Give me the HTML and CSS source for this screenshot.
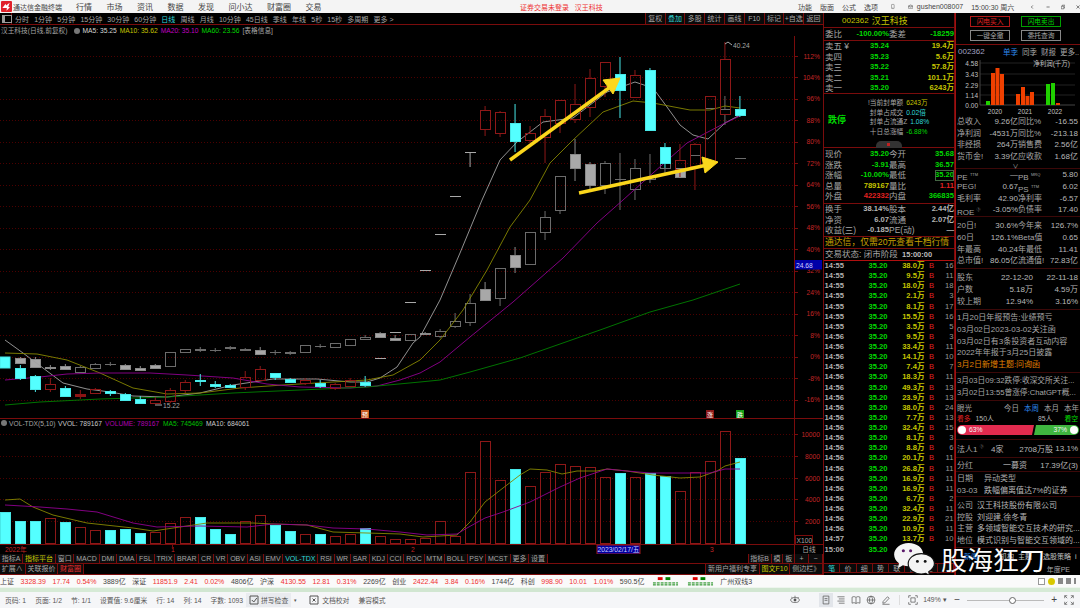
FILE: index.html
```html
<!DOCTYPE html>
<html lang="zh-CN">
<head>
    <meta charset="UTF-8">
    <title>通达信金融终端 - 汉王科技</title>
    <link rel="stylesheet" href="styles.css">
</head>
<body>
    <!-- Title bar -->
    <div class="titlebar">
        <svg class="logo" viewBox="0 0 12 12"><rect width="12" height="12" rx="1" fill="#e0202a"/><path d="M1.5 7.5 5 3l.5 2 4-3-1.6 4.4 1.8.3L6 10.5 6.4 7.6z" fill="#fff"/></svg>
        <span class="app-name">通达信金融终端</span>
        <nav class="menu"><span>行情</span><span>市场</span><span>资讯</span><span>数据</span><span>发现</span><span>问小达</span><span>财富圈</span><span>交易</span></nav>
        <span class="login-note">证券交易未登录&nbsp;&nbsp;&nbsp;汉王科技</span>
        <div class="tools">
            <span>功能</span><span>版面</span><span>公式</span><span>选项</span>
            <svg class="tool-icon" viewBox="0 0 8 10"><rect x="1" y=".5" width="6" height="9" rx="1" fill="none" stroke="#555"/><path d="M3 8h2" stroke="#555"/></svg>
            <svg class="tool-icon mail" viewBox="0 0 11 9"><path d="M1 3.5h9v5H1zM1 3.5 5.5 1 10 3.5 5.5 6z" fill="none" stroke="#555"/></svg>
            <span class="user">gushen008007</span>
            <span class="clock">15:00:30 周六</span>
            <svg class="win-btn" viewBox="0 0 8 8"><path d="M5.5 1 2.5 4l3 3" fill="none" stroke="#333" stroke-width="1.2"/></svg>
            <svg class="win-btn" viewBox="0 0 8 8"><path d="M1 4h6" stroke="#333" stroke-width="1.2"/></svg>
            <svg class="win-btn" viewBox="0 0 8 8"><path d="M.5 2.5h5v5h-5zM2.5 2.5V.5h5v5h-2" fill="none" stroke="#333"/></svg>
            <svg class="win-btn" viewBox="0 0 8 8"><path d="m1 1 6 6M7 1 1 7" stroke="#333" stroke-width="1.2"/></svg>
        </div>
    </div>

    <div class="main">
        <!-- Chart column -->
        <div class="chart-col">
            <div class="period-bar">
                <span class="side-toggle"></span>
                <div class="periods"><span>分时</span><span>1分钟</span><span>5分钟</span><span>15分钟</span><span>30分钟</span><span>60分钟</span><span class="cyan">日线</span><span>周线</span><span>月线</span><span>10分钟</span><span>45日线</span><span>季线</span><span>年线</span><span>5秒</span><span>15秒</span><span>多周期</span><span>更多 &gt;</span></div>
                <div class="chart-btns"><span>复权</span><span class="cyan">叠加</span><span>多股</span><span>统计</span><span>画线</span><span>F10</span><span>标记</span><span>+自选</span><span>返回</span></div>
            </div>
            <div class="legend">
                <span>汉王科技(日线,前复权)</span>
                <i class="legend-dot"></i>
                <span class="white">MA5: 35.25</span>
                <span class="yellow">MA10: 35.62</span>
                <span class="magenta">MA20: 35.10</span>
                <span class="green">MA60: 23.56</span>
                <span>[表格信息]</span>
            </div>
            <svg id="chart" class="chart" viewBox="0 36 823 518"></svg>
            <div class="tab-row">
                <span>指标A</span><span class="yellow">指标平台</span><span>窗口</span><span>MACD</span><span>DMI</span><span>DMA</span><span>FSL</span><span>TRIX</span><span>BRAR</span><span>CR</span><span>VR</span><span>OBV</span><span>ASI</span><span>EMV</span><span class="cyan">VOL-TDX</span><span>RSI</span><span>WR</span><span>SAR</span><span>KDJ</span><span>CCI</span><span>ROC</span><span>MTM</span><span>BOLL</span><span>PSY</span><span>MCST</span><span>更多</span><span>设置</span>
                <span class="push">指标B</span><span>模</span><span>板</span><span class="pm">+</span><span class="pm">−</span>
            </div>
            <div class="tab-row second">
                <span>扩展∧</span><span>关联报价</span><span class="red-tab">财富圈</span>
                <span class="push">新用户福利专享</span><span class="yellow">图文F10</span><span>侧边栏》</span>
            </div>
        </div>

        <!-- Quote column -->
        <div class="quote-col">
            <div class="q-title"><b>002362</b><strong>汉王科技</strong></div>
            <div class="q-row q-ratio"><span>委比</span><b class="green">-100.00%</b><span>委差</span><b class="green">-18259</b></div>
            <div class="q-block q-asks">
                <div class="q-row"><span>卖五 ¥</span><b class="green">35.24</b><i></i><b class="yellow">19.4万</b></div>
                <div class="q-row"><span>卖四</span><b class="green">35.23</b><i></i><b class="yellow">5.6万</b></div>
                <div class="q-row"><span>卖三</span><b class="green">35.22</b><i></i><b class="yellow">57.8万</b></div>
                <div class="q-row"><span>卖二</span><b class="green">35.21</b><i></i><b class="yellow">101.1万</b></div>
                <div class="q-row"><span>卖一</span><b class="green">35.20</b><i></i><b class="yellow">6243万</b></div>
            </div>
            <div class="limit-box">
                <strong class="green">跌停</strong>
                <div class="limit-info">
                    <p>!当前封单额 <em class="yellow">6243万</em></p>
                    <p>&nbsp;封单占成交 <em class="cyan">0.02倍</em></p>
                    <p>&nbsp;封单占流通Z <em class="cyan">1.08%</em></p>
                    <p>&nbsp;十日总涨幅 <em class="green">-6.88%</em></p>
                </div>
                <span class="collapse"></span>
            </div>
            <div class="q-block q-price">
                <div class="q-row"><span>现价</span><b class="green">35.20</b><span>今开</span><b class="green">35.68</b></div>
                <div class="q-row"><span>涨跌</span><b class="green">-3.91</b><span>最高</span><b class="green">36.57</b></div>
                <div class="q-row"><span>涨幅</span><b class="green">-10.00%</b><span>最低</span><b class="green boxed">35.20</b></div>
                <div class="q-row"><span>总量</span><b class="yellow">789167</b><span>量比</span><b class="red">1.11</b></div>
                <div class="q-row"><span>外盘</span><b class="red">422332</b><span>内盘</span><b class="green">366835</b></div>
            </div>
            <div class="q-block q-fund">
                <div class="q-row"><span>换手</span><b>38.14%</b><span>股本</span><b>2.44亿</b></div>
                <div class="q-row"><span>净资</span><b>6.07</b><span>流通</span><b>2.07亿</b></div>
                <div class="q-row"><span>收益(三)</span><b>-0.185</b><span>PE(动)</span><b>—</b></div>
            </div>
            <div class="q-promo">通达信，仅需20元查看千档行情</div>
            <div class="q-state">交易状态: 闭市阶段 <b>15:00:00</b></div>
            <div id="ticks" class="ticks"></div>
            <div class="tick-tabs"><span class="cyan">笔</span><span>价</span><span>细</span><span>势</span><span>联</span><span>债</span><span>主</span><span></span></div>
        </div>

        <!-- Finance column -->
        <div class="fin-col">
            <div class="trade-btns">
                <span class="btn-buy">闪电买入</span><span class="btn-sell">闪电卖出</span>
                <span>一键全撤</span><span>委托查询</span>
            </div>
            <div class="fin-head"><b>002362</b><span class="blue">单季</span><span>同季</span><span>财报</span><span>更多..</span></div>
            <svg class="profit-chart" viewBox="955 58 125 58">
                <path class="pc-grid" d="M980 63h95M980 74h95M980 85h95M980 95h95"/>
                <path class="pc-axis" d="M980 60v45h95"/>
                <text x="978" y="66">4.58</text><text x="978" y="77">3.43</text><text x="978" y="88">2.29</text><text x="978" y="98">1.14</text><text x="978" y="108">0.00</text>
                <text class="pc-title" x="1070" y="66">净利润(千万)</text>
                <rect class="pc-up" x="986" y="101" width="4" height="4"/><rect class="pc-bar" x="991" y="73" width="4" height="32"/><rect class="pc-bar" x="995.5" y="68" width="4" height="37"/><rect class="pc-bar" x="1000" y="74" width="4" height="31"/>
                <rect class="pc-bar" x="1016" y="94" width="4" height="11"/><rect class="pc-bar" x="1021" y="87" width="4" height="18"/><rect class="pc-bar" x="1025.5" y="96" width="4" height="9"/><rect class="pc-bar" x="1030" y="92" width="4" height="13"/>
                <rect class="pc-up" x="1046" y="84" width="4" height="21"/><rect class="pc-up" x="1051" y="83" width="4" height="22"/><rect class="pc-bar" x="1056" y="103" width="4" height="2"/>
                <text class="pc-year" x="995" y="114">2020</text><text class="pc-year" x="1025" y="114">2021</text><text class="pc-year" x="1055" y="114">2022</text>
            </svg>
            <div class="f-block f-income">
                <div class="f-row"><span>总收入</span><b>9.26亿</b><span>同比%</span><b>-16.55</b></div>
                <div class="f-row"><span>净利润</span><b>-4531万</b><span>同比%</span><b>-213.18</b></div>
                <div class="f-row"><span>非经损</span><b>264万</b><span>销售费</span><b>2.56亿</b></div>
                <div class="f-row"><span>货币金!</span><b>3.39亿</b><span>应收款</span><b>1.68亿</b></div>
                <div class="chevron">∨</div>
            </div>
            <div class="f-block f-ratio">
                <div class="f-row"><span>PE <sup>TTM</sup></span><b>—</b><span>PB <sup>MRQ</sup></span><b>5.80</b></div>
                <div class="f-row"><span>PEG!</span><b>0.67</b><span>PS <sup>TTM</sup></span><b>6.02</b></div>
                <div class="f-row"><span>毛利率</span><b>42.90</b><span>净利率</span><b>-6.57</b></div>
                <div class="f-row"><span>ROE <sup>③</sup></span><b>-3.05%</b><span>负债率</span><b>17.40</b></div>
            </div>
            <div class="f-block f-market">
                <div class="f-row"><span>20日!</span><b>30.6%</b><span>今年来</span><b>126.7%</b></div>
                <div class="f-row"><span>60日</span><b>126.1%</b><span>Beta值</span><b>0.65</b></div>
                <div class="f-row"><span>年最高</span><b>40.24</b><span>年最低</span><b>11.41</b></div>
                <div class="f-row"><span>总市值!</span><b>86.05亿</b><span>流通值!</span><b>72.83亿</b></div>
            </div>
            <div class="f-block f-holders">
                <div class="h-row"><span>股东</span><b>22-12-20</b><b>22-11-18</b></div>
                <div class="h-row"><span>户数</span><b>5.18万</b><b>4.59万</b></div>
                <div class="h-row"><span>较上期</span><b>12.94%</b><b>3.16%</b></div>
            </div>
            <div class="f-block f-news">
                <p>1月20日年报预告:业绩预亏</p>
                <p>03月02日2023-03-02关注函</p>
                <p>03月02日有3条投资者互动内容</p>
                <p>2022年年报于3月25日披露</p>
                <p class="orange">3月2日新增主题:问询函</p>
            </div>
            <div class="f-block f-alerts">
                <p>3月03日09:32跌停:收深交所关注...</p>
                <p>3月02日13:55曾涨停:ChatGPT概...</p>
            </div>
            <div class="f-block f-vision">
                <div class="v-head"><span class="v-title">眼光</span><span>今日</span><span class="blue">本周</span><span>本月</span><span>本年</span></div>
                <div class="v-counts"><em class="red">看多</em><b>150人</b><b class="v-right">85人</b><em class="green">看空</em></div>
                <div class="v-bar">
                    <div class="v-up"><i class="v-thumb"></i>63%</div>
                    <div class="v-down">37%<i class="v-thumb"></i></div>
                </div>
            </div>
            <div class="f-block f-legal"><span>法人1 <sup>③</sup></span><b>4家</b><b>2708万股</b><b>13.1%</b></div>
            <div class="f-block f-divid"><span>分红</span><b>一募资</b><b>17.39亿(3)</b></div>
            <div class="f-block f-event">
                <div class="e-row"><span>日期</span><span>异动类型</span></div>
                <div class="e-row"><span>03-03</span><span class="light">跌幅偏离值达7%的证券</span></div>
            </div>
            <div class="f-block f-profile">
                <div class="e-row"><span>公司</span><span class="light">汉王科技股份有限公司</span></div>
                <div class="e-row"><span>控股</span><span class="light">刘迎建,徐冬青</span></div>
                <div class="e-row"><span>主营</span><span class="light">多领域智能交互技术的研究...</span></div>
                <div class="e-row"><span>地位</span><span class="light">模式识别与智能交互领域的...</span></div>
            </div>
            <div class="f-tabs"><span class="blue">新闻</span><span class="tab-gap">机构</span><span>主题</span><span class="tab-gap-sm">选股策略</span><span>i</span></div>
            <div class="f-last"><span>年度PE</span></div>
        </div>

        <!-- Watermark over the screenshot -->
        <div class="watermark">
            <svg class="wm-logo" viewBox="0 0 44 34">
                <path d="M16 1C7.500 1 1 6.400 1 13c0 3.700 2 6.800 5 9l-1 5 5-3c2 .600 4 .9 6 .9 8.500 0 15-5.400 15-12S24.500 1 16 1z" fill="#f4f4f4"/>
                <circle cx="10.500" cy="9" r="1.600" fill="#5a1a6a"/><circle cx="18" cy="9" r="1.600" fill="#5a1a6a"/>
                <path d="M29 12c-7.700 0-13.500 4.700-13.500 10.500S21.300 33 29 33c1.600 0 3-.2 4.500-.7l4 2.200-.8-3.900c3-1.900 5.800-4.900 5.800-8.100C42.500 16.700 36.700 12 29 12z" fill="#f4f4f4" stroke="#111" stroke-width="1.200"/>
                <circle cx="25" cy="20" r="1.500" fill="#111"/><circle cx="33" cy="20" r="1.500" fill="#111"/>
            </svg>
            <span>股海狂刀</span>
        </div>
    </div>

    <!-- Market index strip -->
    <div class="indexbar">
        <span>上证</span><em>3328.39</em><em>17.74</em><em>0.54%</em><span>3889亿</span>
        <span>深证</span><em>11851.9</em><em>2.41</em><em>0.02%</em><span>4806亿</span>
        <span>沪深</span><em>4130.55</em><em>12.81</em><em>0.31%</em><span>2269亿</span>
        <span>创业</span><em>2422.44</em><em>3.84</em><em>0.16%</em><span>1744亿</span>
        <span>科创</span><em>998.90</em><em>10.01</em><em>1.01%</em><span>590.5亿</span>
        <svg class="mini-ticks" viewBox="0 0 28 9"><rect x="6" width="5" height="3" fill="#e00000"/><rect x="14" width="5" height="3" fill="#008000"/><path d="M1 6h26M1 8h26" stroke="#008000" stroke-dasharray="3 1"/></svg>
        <svg class="mini-ticks" viewBox="0 0 28 9"><rect x="6" width="5" height="3" fill="#e00000"/><rect x="14" width="5" height="3" fill="#008000"/><path d="M1 6h26M1 8h26" stroke="#008000" stroke-dasharray="3 1"/></svg>
        <span class="server">广州双线3</span>
        <div class="index-tools">
            <i class="check-box"></i><i class="smile"></i><i class="tool-dot"></i><i class="tool-dot"></i><i class="tool-dot small"></i>
        </div>
    </div>
    <div class="greenstrip"><i></i></div>

    <!-- Word processor status bar -->
    <div class="wordbar">
        <span>页码: 1</span><span>页面: 1/2</span><span>节: 1/1</span><span>设置值: 9.6厘米</span><span>行: 14</span><span>列: 14</span><span>字数: 1093</span>
        <span class="spell"><svg viewBox="0 0 10 10"><path d="M1 1h8v8H1z" fill="none" stroke="#555"/><path d="m2.800 5 2 2 3-4" fill="none" stroke="#555"/></svg>拼写检查</span><span class="caret">▾</span>
        <span class="icon-text"><svg viewBox="0 0 10 10"><path d="M1 1h8v8H1z" fill="none" stroke="#555"/><path d="m3.500 3.500 3 3M6.500 3.500l-3 3" stroke="#555"/></svg>文档校对</span>
        <span>兼容模式</span>
        <div class="view-tools">
            <svg class="eye" viewBox="0 0 14 14"><ellipse cx="7" cy="7" rx="6" ry="3.500" fill="none" stroke="#555"/><circle cx="7" cy="7" r="2" fill="#555"/><path d="M2 3l1.500 1.500M12 3l-1.500 1.500M7 1v2" stroke="#555"/></svg>
            <svg class="active" viewBox="0 0 14 14"><path d="M3 1.500h8v11H3zM5 5h4M5 7.500h4" fill="none" stroke="#555"/></svg>
            <svg viewBox="0 0 14 14"><path d="M2 2.500h10M4 5.500h8M2 8.500h10M4 11.500h8" fill="none" stroke="#555"/></svg>
            <svg viewBox="0 0 14 14"><path d="M1.500 3c2-1 4-1 5.500.5C8.500 2 10.500 2 12.500 3v8.500c-2-1-4-1-5.500.5-1.500-1.500-3.500-1.500-5.500-.5zM7 3.500V12" fill="none" stroke="#555"/></svg>
            <svg viewBox="0 0 14 14"><circle cx="7" cy="7" r="5.500" fill="none" stroke="#555"/><path d="M1.500 7h11M7 1.500c-3 3-3 8 0 11M7 1.500c3 3 3 8 0 11" fill="none" stroke="#555"/></svg>
            <svg viewBox="0 0 14 14"><path d="m3 9 6-6.500 2.500 2L5.500 11 2.500 11.500zM2 13h10" fill="none" stroke="#555"/></svg>
            <i class="view-sep"></i>
            <svg viewBox="0 0 14 14"><path d="M1 4V1h3M10 1h3v3M13 10v3h-3M4 13H1v-3M4 4h6v6H4z" fill="none" stroke="#555"/></svg>
            <span class="zoom-val">149% ▾</span>
            <span class="zoom-btn">−</span>
            <div class="slider"><i></i></div>
            <span class="zoom-btn">+</span>
            <svg viewBox="0 0 14 14"><path d="M1 4.500V1h3.500M9.500 1H13v3.500M13 9.500V13H9.500M4.500 13H1V9.500M1 1l3.500 3.500M13 1 9.500 4.500M13 13 9.500 9.500M1 13l3.500-3.500" fill="none" stroke="#555"/></svg>
        </div>
    </div>

    <script src="chart.js"></script>
</body>
</html>
```

FILE: styles.css
```css
:root {
    --line: #7a0c0c;
    --label: #a6a6a6;
    --green: #00d800;
    --yellow: #c4c400;
    --red: #e02020;
    --cyan: #30d8d8;
}

* { box-sizing: border-box; }

body {
    margin: 0;
    width: 1080px;
    height: 608px;
    overflow: hidden;
    background: #000;
    font-family: "Liberation Sans", "Noto Sans CJK SC", sans-serif;
    font-size: 7px;
    color: var(--label);
}

p { margin: 0; }
em, i { font-style: normal; }
b { font-weight: normal; }

.green { color: var(--green); }
.yellow { color: var(--yellow); }
.red { color: var(--red); }
.cyan { color: var(--cyan); }
.white { color: #d8d8d8; }
.magenta { color: #c000c0; }
.blue { color: #2c86e8; }
.orange { color: #e08000; }

/* Title bar */
.titlebar {
    height: 13px;
    background: #f4f4f4;
    color: #444;
    display: flex;
    align-items: center;
    position: relative;
}

.logo { width: 11px; height: 11px; margin-left: 1px; flex: none; }
.app-name { margin-left: 1px; width: 63px; white-space: nowrap; }

.menu { display: flex; font-size: 8px; gap: 14.500px; white-space: nowrap; }

.login-note {
    position: absolute;
    left: 520px;
    color: #ee3030;
    white-space: nowrap;
}

.tools {
    margin-left: auto;
    width: 282px;
    display: flex;
    align-items: center;
    gap: 8px;
    white-space: nowrap;
}

.tool-icon { width: 7px; height: 9px; margin-left: 5px; }
.tool-icon.mail { width: 10px; margin-left: 5px; margin-right: -4px; }
.user { margin-left: 0; }
.clock { margin-left: 0; }
.win-btn { width: 8px; height: 8px; margin-left: 3px; }
.clock + .win-btn { margin-left: 8px; }

.main { height: 562px; display: flex; position: relative; }

/* Chart column */
.chart-col { width: 823px; flex: none; display: flex; flex-direction: column; }

.period-bar {
    height: 12px;
    display: flex;
    align-items: center;
    border-bottom: 1px solid var(--line);
    white-space: nowrap;
}

.side-toggle {
    width: 12px;
    height: 100%;
    border-right: 1px solid var(--line);
    position: relative;
    flex: none;
}

.side-toggle::after {
    content: "";
    position: absolute;
    left: 2px;
    top: 2px;
    width: 6px;
    height: 6px;
    border: 1px solid #999;
    border-left-width: 3px;
}

.periods { display: flex; gap: 5.200px; margin-left: 3px; }

.chart-btns { margin-left: auto; display: flex; height: 100%; }

.chart-btns span {
    width: 19.800px;
    text-align: center;
    line-height: 11px;
    border-left: 1px solid var(--line);
    background: #0a0a0a;
}

.legend {
    height: 11px;
    line-height: 11px;
    padding-left: 1px;
    display: flex;
    align-items: center;
    gap: 3px;
    font-size: 6.700px;
    white-space: nowrap;
}

.legend-dot {
    width: 6px;
    height: 6px;
    border-radius: 50%;
    background: #777;
    margin: 0 0 0 3px;
}

.chart { width: 823px; height: 518px; display: block; flex: none; }

.chart text { font-size: 6.700px; fill: #c42626; }
.chart .axis-label { text-anchor: end; }
.chart .dim { fill: #a6a6a6; }
.chart .v-yellow { fill: var(--yellow); }
.chart .v-white { fill: #c8c8c8; }
.chart .v-magenta { fill: #b000b0; }
.chart .v-green { fill: #00c000; }
.chart .date-text { fill: #d0d0ff; text-anchor: middle; }
.chart .mark-text { fill: #fff; font-size: 6px; text-anchor: middle; }

.grid { stroke: #4c0000; stroke-dasharray: 1 2; fill: none; }
.frame { stroke: var(--line); fill: none; }
.wick { stroke-width: 1; }

.c-red { stroke: #8e1818; fill: none; }
.c-dark { stroke: #8c1414; fill: #8c1414; }
.c-cyan { stroke: #48e8e8; fill: #54ffff; }
.c-gray { stroke: #6c6c6c; fill: none; }
.c-grayfill { stroke: #8a8a8a; fill: #a8a8a8; }
.c-dash { stroke: #a8a8a8; fill: none; }

.ma { fill: none; stroke-width: .9; stroke-linejoin: round; }
.ma5 { stroke: #a0a0a0; }
.ma10 { stroke: #868600; }
.ma20 { stroke: #900090; }
.ma60 { stroke: #008000; }

.arrow { fill: #fbd71c; stroke: #fbd71c; }
.arrow-shaft { stroke: #fbd71c; stroke-width: 3.500; }

.tab-row {
    height: 10px;
    display: flex;
    border-bottom: 1px solid var(--line);
    line-height: 9px;
    white-space: nowrap;
}

.tab-row span {
    padding: 0 1.800px;
    border-right: 1px solid var(--line);
    background: #0c0c0c;
}

.tab-row .push { margin-left: auto; border-left: 1px solid var(--line); }
.tab-row .pm { width: 14px; text-align: center; }
.tab-row .red-tab { color: #f03030; }

.second { height: 11px; }

/* Quote column */
.quote-col {
    width: 132px;
    flex: none;
    display: flex;
    flex-direction: column;
    border-left: 1px solid var(--line);
    border-right: 1px solid var(--line);
    font-size: 8.500px;
    white-space: nowrap;
}

.q-title {
    height: 15px;
    border-bottom: 1px solid var(--line);
    color: var(--yellow);
    display: flex;
    align-items: center;
    gap: 3px;
    padding-left: 18px;
}

.q-title b { font-size: 8px; }
.q-title strong { font-weight: normal; font-size: 9px; }

.q-row {
    display: grid;
    grid-template-columns: 20px 44px 21px 44px;
    height: 10.500px;
    line-height: 10.500px;
    padding-left: 1px;
}

.q-row b { justify-self: end; font-weight: bold; font-size: 7.600px; }
.q-ratio { height: 13px; line-height: 12px; border-bottom: 1px solid var(--line); }
.q-row .boxed { outline: 1px solid #446644; outline-offset: -1px; }

.q-block { border-bottom: 1px solid var(--line); }
.q-asks { height: 53px; }
.q-price { height: 56px; padding-top: 1px; }
.q-fund { height: 33px; }
.q-fund b { color: #b4b4b4; }

.limit-box {
    height: 54px;
    border-bottom: 1px solid var(--line);
    display: flex;
    position: relative;
    font-size: 6.700px;
}

.limit-box strong { font-size: 9px; margin: 19px 0 0 4px; }
.limit-info { margin: 4px 0 0 22px; line-height: 9.700px; }
.limit-info em { margin-left: 1px; }

.collapse {
    position: absolute;
    left: 52px;
    bottom: -1px;
    width: 26px;
    height: 7px;
    background: #333;
    border-radius: 5px 5px 0 0;
}

.collapse::after {
    content: "";
    position: absolute;
    left: 11px;
    top: 2px;
    width: 3px;
    height: 3px;
    background: #c02020;
}

.q-promo {
    height: 12px;
    line-height: 11px;
    font-size: 8.800px;
    color: #c8a000;
    border-bottom: 1px solid var(--line);
    padding-left: 1px;
}

.q-state {
    height: 12px;
    line-height: 11px;
    padding-left: 1px;
    border-bottom: 1px solid #b01010;
}

.q-state b { color: #bbb; font-weight: bold; font-size: 7.500px; margin-left: 2px; }

.ticks { height: 302px; font-size: 7.600px; }

.tick {
    display: grid;
    grid-template-columns: 24px 39px 37px 14px 15px;
    height: 10.130px;
    line-height: 10.130px;
    padding-left: 0.500px;
}

.tick .t-time { color: #b0b0b0; font-weight: bold; }
.tick .t-price { color: var(--green); font-weight: bold; text-align: right; }
.tick .t-vol { color: var(--yellow); font-weight: bold; text-align: right; }
.tick .t-flag { color: #e02020; text-align: center; }
.tick .t-count { color: #999; text-align: right; }

.tick-tabs {
    height: 10px;
    display: flex;
    border-top: 1px solid var(--line);
    border-bottom: 1px solid var(--line);
    font-size: 7px;
    line-height: 9px;
    background: #0a0a0a;
}

.tick-tabs span {
    flex: 1;
    text-align: center;
    border-right: 1px solid var(--line);
}

/* Finance column */
.fin-col {
    flex: 1;
    min-width: 0;
    border-left: 1px solid #a01010;
    font-size: 8px;
    white-space: nowrap;
    overflow: hidden;
}

.trade-btns {
    height: 32px;
    border-bottom: 1px solid var(--line);
    display: grid;
    grid-template-columns: 40px 40px;
    justify-content: start;
    column-gap: 11px;
    row-gap: 3px;
    padding: 3px 0 0 14px;
    font-size: 6.700px;
    grid-auto-rows: 11px;
}

.trade-btns span {
    border: 1px solid #888;
    text-align: center;
    line-height: 9px;
}

.trade-btns .btn-buy { border-color: #b01818; color: #e02020; }
.trade-btns .btn-sell { border-color: #00a000; color: #00d000; }

.fin-head {
    height: 13px;
    display: flex;
    align-items: center;
    padding-left: 2px;
    gap: 4px;
    font-size: 7.500px;
}

.fin-head b { width: 41px; font-size: 8px; color: #a0a0c0; }

.profit-chart { display: block; width: 125px; height: 58px; margin-left: -1px; }
.profit-chart text { font-size: 6.500px; fill: #c0c0c0; text-anchor: end; }
.profit-chart .pc-year { text-anchor: middle; }
.pc-grid { stroke: #222; fill: none; }
.pc-axis { stroke: #444; fill: none; }
.pc-bar { fill: #f04000; }
.pc-up { fill: #20d000; }

.f-block { border-bottom: 1px solid #3c0808; }

.f-row {
    display: grid;
    grid-template-columns: 31px 30px 24px 36px;
    padding-left: 1px;
    height: 11.800px;
    line-height: 11.800px;
}

.f-row b { justify-self: end; color: #b8b8b8; }
.f-row sup { font-size: 4px; }

.f-income { height: 53px; }
.f-income .f-row { height: 11.700px; line-height: 11.700px; }
.chevron { text-align: center; height: 6px; line-height: 6px; font-size: 6px; margin-left: -5px; }

.f-ratio { height: 48px; }
.f-market { height: 52px; padding-top: 3px; }

.f-holders { height: 41px; padding-top: 3px; }
.h-row { display: grid; grid-template-columns: 31px 45px 45px; padding-left: 1px; height: 12px; line-height: 12px; }
.h-row b { justify-self: end; color: #b8b8b8; }

.f-news { height: 63px; padding: 2px 0 0 1px; line-height: 11.800px; }
.f-alerts { height: 28px; padding: 2px 0 0 1px; line-height: 12px; font-size: 7.700px; }

.f-vision { height: 39px; padding: 2px 1px 0; }
.v-head { display: flex; gap: 5px; height: 11px; line-height: 11px; font-size: 7.500px; }
.v-title { width: 42px; }
.v-counts { display: flex; height: 10px; line-height: 10px; font-size: 6.800px; padding-right: 1px; }
.v-counts b { color: #b8b8b8; margin-left: 5px; }
.v-counts .v-right { margin-left: auto; margin-right: 12px; }

.v-bar { display: flex; height: 10px; margin-top: 1px; line-height: 10px; font-size: 6.800px; color: #f4f4f4; }

.v-up {
    width: 77px;
    background: #e22b4f;
    clip-path: polygon(0 0, 100% 0, calc(100% - 2px) 100%, 0 100%);
    border-radius: 5px 0 0 5px;
    display: flex;
    align-items: center;
    gap: 2px;
}

.v-down {
    flex: 1;
    background: #3fb53f;
    clip-path: polygon(2px 0, 100% 0, 100% 100%, 0 100%);
    border-radius: 0 5px 5px 0;
    display: flex;
    align-items: center;
    justify-content: flex-end;
    gap: 2px;
}

.v-thumb { width: 8px; height: 8px; border-radius: 50%; background: #fff; margin: 0 1px; }

.f-legal {
    display: grid;
    grid-template-columns: 34px 26px 36px 25px;
    align-items: center;
    height: 18px;
    padding-left: 1px;
}

.f-legal sup { font-size: 4px; }
.f-legal b { color: #b8b8b8; }
.f-legal b:nth-child(n+3) { justify-self: end; }

.f-divid { display: flex; align-items: center; height: 14px; padding: 0 2px 0 1px; }
.f-divid b { color: #b8b8b8; }
.f-divid b:nth-child(2) { margin-left: 30px; }
.f-divid b:nth-child(3) { margin-left: auto; }

.f-event { height: 25px; padding-top: 1px; }
.f-profile { height: 51px; padding-top: 3px; }
.e-row { display: flex; gap: 7px; padding-left: 1px; height: 11.700px; line-height: 11.700px; }
.e-row span:first-child { width: 13px; }
.e-row .light { color: #b8b8b8; }
.e-row span:first-child + span { flex: 1; }
.f-event .e-row span:first-child { width: 20px; }

.f-tabs { height: 16px; display: flex; gap: 4px; align-items: center; padding-left: 8px; color: #c0c0c0; font-size: 7px; }
.f-tabs .tab-gap { margin-left: 18px; }
.f-tabs .tab-gap-sm { margin-left: 7px; }
.f-last { height: 11px; text-align: right; padding-right: 10px; font-size: 7px; }

/* Watermark */
.watermark {
    position: absolute;
    left: 893px;
    top: 529px;
    display: flex;
    align-items: center;
    gap: 5px;
    color: #fafafa;
    font-family: "Noto Sans CJK SC", sans-serif;
    font-size: 26px;
    line-height: 32px;
    white-space: nowrap;
}

.wm-logo { width: 43px; height: 33px; }

/* Index strip */
.indexbar {
    height: 12px;
    background: #fafafa;
    color: #444;
    display: flex;
    align-items: center;
    gap: 6.600px;
    white-space: nowrap;
    position: relative;
}

.indexbar em { color: #f03030; }
.mini-ticks { width: 27px; height: 9px; margin-left: 1px; }
.server { margin-left: 0; }

.index-tools {
    margin-left: auto;
    display: flex;
    align-items: center;
    gap: 3px;
    padding-right: 4px;
}

.check-box { width: 7px; height: 7px; border: 1px solid #999; background: #fff; }
.smile { width: 7px; height: 7px; border-radius: 50%; background: #d8c800; }
.tool-dot { width: 5px; height: 6px; background: #888; }
.tool-dot.small { width: 2px; }

.greenstrip {
    height: 5px;
    background: #d6ead6;
    position: relative;
    border-top: 1px solid #eef5ee;
}

.greenstrip i {
    display: block;
    margin-left: 190px;
    width: 600px;
    height: 100%;
    background: #d1e6d1;
}

/* Word status bar */
.wordbar {
    height: 16px;
    background: #f5f6f8;
    color: #555;
    display: flex;
    align-items: center;
    padding-left: 5px;
    gap: 9px;
    white-space: nowrap;
    font-size: 6.800px;
}

.wordbar svg { width: 10px; height: 10px; flex: none; }
.spell {
    display: flex;
    align-items: center;
    gap: 2px;
    background: #e9ebef;
    height: 14px;
    padding: 0 3px;
    margin-left: -6px;
}
.caret { font-size: 5px; margin-left: -6px; }
.icon-text { display: flex; align-items: center; gap: 3px; margin-left: 3px; }

.view-tools {
    margin-left: auto;
    display: flex;
    align-items: center;
    gap: 5px;
    padding-right: 6px;
}

.view-tools .eye { margin-right: 16px; }
.view-tools .active { background: #e2e5ea; outline: 2px solid #e2e5ea; }
.view-sep { width: 1px; height: 10px; background: #ddd; margin: 0 3px; }
.zoom-val { width: 24px; }
.zoom-btn { font-size: 10px; color: #444; line-height: 10px; margin: 0 2px; }

.slider {
    width: 77px;
    height: 1px;
    background: #bbb;
    position: relative;
}

.slider i {
    position: absolute;
    left: 42px;
    top: -3px;
    width: 7px;
    height: 7px;
    border-radius: 50%;
    background: #fff;
    border: 1px solid #666;
}
```

FILE: chart.js
```js
// Daily chart: stock candles over the grey overlay candles, plus the volume panel
const chart = document.getElementById('chart');
const colX = n => 5.4 + 14.99 * n;
const HALF = 5;

// [type, bodyTop, bodyBottom, wickTop, wickBottom]  (pixel rows of the page)
const mainCandles = [
    ['c',357,368,357,371],['c',368,378,365,380],['c',376,389,375,392],['r',384,389,378,392],['c',388,396,386,397],
    ['f',394,396,390,399],['r',389,393,388,394],['c',391,393,390,396],['c',394,400,393,401],['c',399,403,396,404],
    ['r',400,403,397,404],['r',390,401,388,403],['r',382,390,380,393],['c',380,381,374,386],['c',384,386,381,388],
    ['c',385,387,384,388],['r',377,387,371,390],['r',369,380,366,381],['c',373,377,373,380],['c',379,382,378,383],
    ['r',380,383,378,385],['c',383,386,380,388],['r',384,388,383,390],['r',380,386,378,387],['c',382,385,376,387],
    ['d',358,358,358,358],['d',332,332,332,332],['d',302,302,302,302],['d',270,270,270,270],['d',234,234,234,234],
    ['d',196,196,196,196],['d',152,152,152,167],['r',110,129,106,136],['r',112,133,111,137],['c',123,141,104,152],
    ['r',133,140,126,143],['r',116,137,109,163],['r',100,123,100,133],['r',104,119,84,123],['r',78,107,69,117],
    ['r',62,86,62,97],['c',74,90,57,118],['r',75,97,70,98],['c',70,130,68,130],['c',147,163,143,168],
    ['r',160,169,144,177],['r',144,166,143,190],['r',96,163,96,163],['r',59,114,42,114],['c',109,115,96,117]
];

// [column, filled, bodyTop, bodyBottom, wickTop, wickBottom]
const overlayCandles = [
    [1,1,358,363,357,364],[2,1,359,367,357,367],[3,1,367,368,365,370],[4,1,366,369,364,370],[5,0,367,372,366,373],
    [6,0,364,368,363,369],[7,0,364,364,362,366],[8,1,365,369,364,370],[9,1,368,370,366,371],[10,1,365,368,364,369],
    [11,0,352,366,352,366],[12,0,349,352,349,352],[13,0,349,350,347,352],[14,0,350,350,348,352],[15,0,347,348,346,350],
    [16,0,349,350,348,351],[17,1,350,354,347,354],[18,0,352,352,350,355],[19,0,352,353,351,355],[20,0,345,352,345,352],
    [21,0,346,346,344,348],[22,0,343,347,343,347],[23,0,339,345,339,345],[24,0,337,339,335,340],[25,1,333,337,332,337],
    [26,1,338,340,335,341],[27,0,334,340,334,340],[28,1,333,334,332,335],[29,0,331,336,329,338],[30,0,321,326,313,328],
    [31,0,303,322,294,326],[32,1,289,300,282,300],[33,0,268,298,268,306],[34,1,255,267,247,273],[35,0,232,264,232,264],
    [36,0,217,232,211,240],[37,0,176,210,176,214],[38,1,154,168,139,181],[39,1,164,185,162,190],[40,0,163,185,161,194],
    [41,0,179,179,153,210],[42,0,168,189,159,200],[43,0,177,179,154,183],[44,0,163,168,152,173],[45,1,168,177,168,178],
    [46,0,155,166,155,166],[47,0,108,163,108,163],[48,0,109,114,96,125],[49,0,158,158,158,158]
];

const volumeTops = [512,521,521,518,522,527,530,530,529,533,532,523,517,517,529,534,521,515,525,531,534,534,536,534,528,
    536,539,539,538,521,536,472,441,480,469,486,472,464,466,467,477,473,477,473,476,491,472,461,431,458];

const lines = {
    ma5: '5,340 23,353 43,368 63,383 87,389 110,392 133,396 167,397 200,393 233,385 273,379 317,379 350,382 367,382 380,378 397,367 413,343 420,337 440,300 460,253 482,200 500,160 517,142 543,122 573,118 607,92 635,82 653,88 667,107 680,125 693,135 708,139 725,123 740,115',
    ma10: '5,353 37,354 67,360 100,373 133,388 167,394 200,393 240,388 283,385 333,382 367,380 393,375 420,360 440,340 463,310 487,270 510,227 530,200 550,163 573,140 603,112 633,101 653,103 690,110 710,110 725,106 740,108',
    ma20: '5,380 40,377 67,374 100,373 150,373 187,375 233,378 267,384 300,387 350,388 377,386 400,380 420,373 440,362 470,337 513,302 563,258 597,223 623,200 653,173 687,143 725,123 740,116',
    ma60: '5,405 40,402 100,399 167,397 233,393 300,390 367,387 420,382 440,380 470,372 520,358 560,344 600,330 650,312 693,300 740,284'
};

const volLines = {
    ma10: '5,500 20,499 33,507 53,515 87,523 133,528 153,531 180,527 207,523 253,523 273,524 307,525 333,532 367,533 400,534 423,537 457,535 470,522 485,502 503,488 520,475 530,469 547,470 562,474 577,471 597,471 607,469 627,471 653,475 680,478 700,477 717,471 725,466 740,462',
    ma20: '5,505 40,507 67,509 97,512 133,523 157,527 200,526 247,527 273,524 307,525 333,528 367,529 400,532 427,535 457,534 467,528 485,518 503,512 530,502 560,487 580,478 607,469 627,471 650,473 680,473 710,473 725,469 740,469'
};

function candle(x, top, bottom, wickTop, wickBottom, cls) {
    let s = '';
    if (wickTop < top) s += `<path class="wick ${cls}" d="M${x} ${wickTop}V${top}"/>`;
    if (wickBottom > bottom) s += `<path class="wick ${cls}" d="M${x} ${bottom}V${wickBottom}"/>`;
    const px = Math.round(x - HALF) + 0.5;
    s += `<rect class="${cls}" x="${px}" y="${top + 0.5}" width="${HALF * 2}" height="${Math.max(bottom - top, 0.01)}"/>`;
    return s;
}

let svg = '';

// Grid and frames
for (let i = 0; i < 17; i++) {
    const y = Math.round(56 + 21.47 * i) + 0.5;
    svg += `<path class="grid" d="M0 ${y}H794"/><path class="frame" d="M794 ${y}h4"/>`;
}
[434, 456, 478, 499, 521].forEach(y => {
    svg += `<path class="grid" d="M0 ${y + 0.5}H794"/><path class="frame" d="M794 ${y + 0.5}h4"/>`;
});
svg += '<path class="frame" d="M0 418.500H823M0 544.500H823M794.500 36V554"/>';

// Axis labels
['112%','104%','96%','88%','80%','72%','64%','56%','48%','40%','32%','24%','16%','8%','0%','-8%','-16%'].forEach((label, i) => {
    svg += `<text class="axis-label" x="820" y="${58.5 + 21.47 * i}">${label}</text>`;
});
[[10000,434],[8000,456],[6000,478],[4000,499],[2000,521]].forEach(([label, y]) => {
    svg += `<text class="axis-label" x="820" y="${y + 2.5}">${label}</text>`;
});
svg += '<rect x="795" y="260" width="27" height="9.500" fill="#0000a8"/><text x="796" y="267.500" class="date-text" style="text-anchor:start">24.68</text>';
svg += '<rect class="frame" x="795.500" y="535.500" width="17" height="9"/><text class="dim" x="796.500" y="542.500">X100</text>';
svg += '<text class="dim" x="809" y="552" style="text-anchor:middle">日线</text>';

// Overlay candles sit underneath
overlayCandles.forEach(([n, filled, top, bottom, wt, wb]) => {
    svg += candle(colX(n), top, bottom, wt, wb, filled ? 'c-grayfill' : 'c-gray');
});

// Moving averages
Object.keys(lines).forEach(k => {
    svg += `<polyline class="ma ${k}" points="${lines[k]}"/>`;
});

// Stock candles and volume bars
const classes = { r: 'c-red', c: 'c-cyan', f: 'c-dark', d: 'c-dash' };
mainCandles.forEach(([type, top, bottom, wt, wb], n) => {
    const x = colX(n);
    if (n === 0) {
        svg += `<rect class="c-cyan" x="0" y="${top}" width="10" height="${bottom - top}"/>`;
    } else {
        svg += candle(x, top, bottom, wt, wb, classes[type]);
    }
    const px = Math.max(Math.round(x - HALF) + 0.5, 0);
    const cls = type === 'c' ? 'c-cyan' : 'c-red';
    svg += `<rect class="${cls}" x="${px}" y="${volumeTops[n] + 0.5}" width="${HALF * 2}" height="${543 - volumeTops[n]}"/>`;
});

Object.keys(volLines).forEach(k => {
    svg += `<polyline class="ma ${k}" points="${volLines[k]}"/>`;
});

// Hand-drawn arrows on the screenshot
svg += '<path class="arrow-shaft" d="M510 160 609 88"/><polygon class="arrow" points="620,78 603,80 613,94"/>';
svg += '<path class="arrow-shaft" d="M579 193 707 165"/><polygon class="arrow" points="718,162 702,157 705,173"/>';

// Price labels and markers
svg += '<path class="c-dash" d="M725 44l3-2 4 3"/><text class="dim" x="733" y="48">40.24</text>';
svg += '<path class="c-dash" d="M155 405h7"/><text class="dim" x="163" y="408">15.22</text>';
svg += '<rect x="361" y="410" width="8" height="8" fill="#c85a20"/><text class="mark-text" x="365" y="416.500">预</text>';
svg += '<rect x="706" y="410" width="8" height="8" fill="#8c1818"/><text class="mark-text" x="710" y="416.500">涨</text>';
svg += '<rect x="736" y="410" width="8" height="8" fill="#18a018"/><text class="mark-text" x="740" y="416.500">跌</text>';

// Volume legend
svg += '<circle cx="4" cy="423" r="3" fill="#777"/>';
svg += '<text class="dim" x="9" y="426">VOL-TDX(5,10)</text><text class="v-white" x="58" y="426">VVOL: 789167</text>';
svg += '<text class="v-magenta" x="105" y="426">VOLUME: 789167</text><text class="v-green" x="163" y="426">MA5: 745469</text>';
svg += '<text class="v-white" x="206" y="426">MA10: 684061</text>';

// Date axis
svg += '<text x="5" y="552">2022年</text><text x="171" y="552">1</text><text x="411" y="552">2</text><text x="710" y="552">3</text>';
svg += '<path class="frame" d="M172.500 545v4"/>';
svg += '<rect x="597" y="545" width="43" height="9" fill="#0000a0" stroke="#a01a1a"/><text class="date-text" x="618.500" y="552">2023/02/17/五</text>';

// Small marker corner icons
svg += '<path d="M778 28l3 3-3 3-3-3z" fill="none" stroke="#888"/><rect x="785" y="28" width="6" height="6" fill="none" stroke="#888"/>';

chart.innerHTML = svg;

// Tick list
const ticks = document.getElementById('ticks');
const vols = ['38.0','9.5','18.0','2.1','8.1','15.5','3.5','9.5','33.4','14.1','7.4','18.3','49.3','23.9','38.0','7.7','32.4','8.1','8.8','20.1','26.8','16.9','16.9','6.7','32.4','22.9','10.9','13.7',''];
const counts = [16,11,18,3,17,16,5,3,11,10,7,11,13,13,24,13,15,3,6,11,11,11,11,2,11,21,11,10,''];
vols.forEach((vol, i) => {
    const time = i < 7 ? '14:55' : i < 27 ? '14:56' : i === 27 ? '14:57' : '15:00';
    const row = document.createElement('div');
    row.className = 'tick';
    row.innerHTML = `<span class="t-time">${time}</span><span class="t-price">35.20</span>` +
        `<span class="t-vol">${vol ? vol + '万' : ''}</span><span class="t-flag">${vol ? 'B' : ''}</span><span class="t-count">${counts[i]}</span>`;
    ticks.appendChild(row);
});
```
